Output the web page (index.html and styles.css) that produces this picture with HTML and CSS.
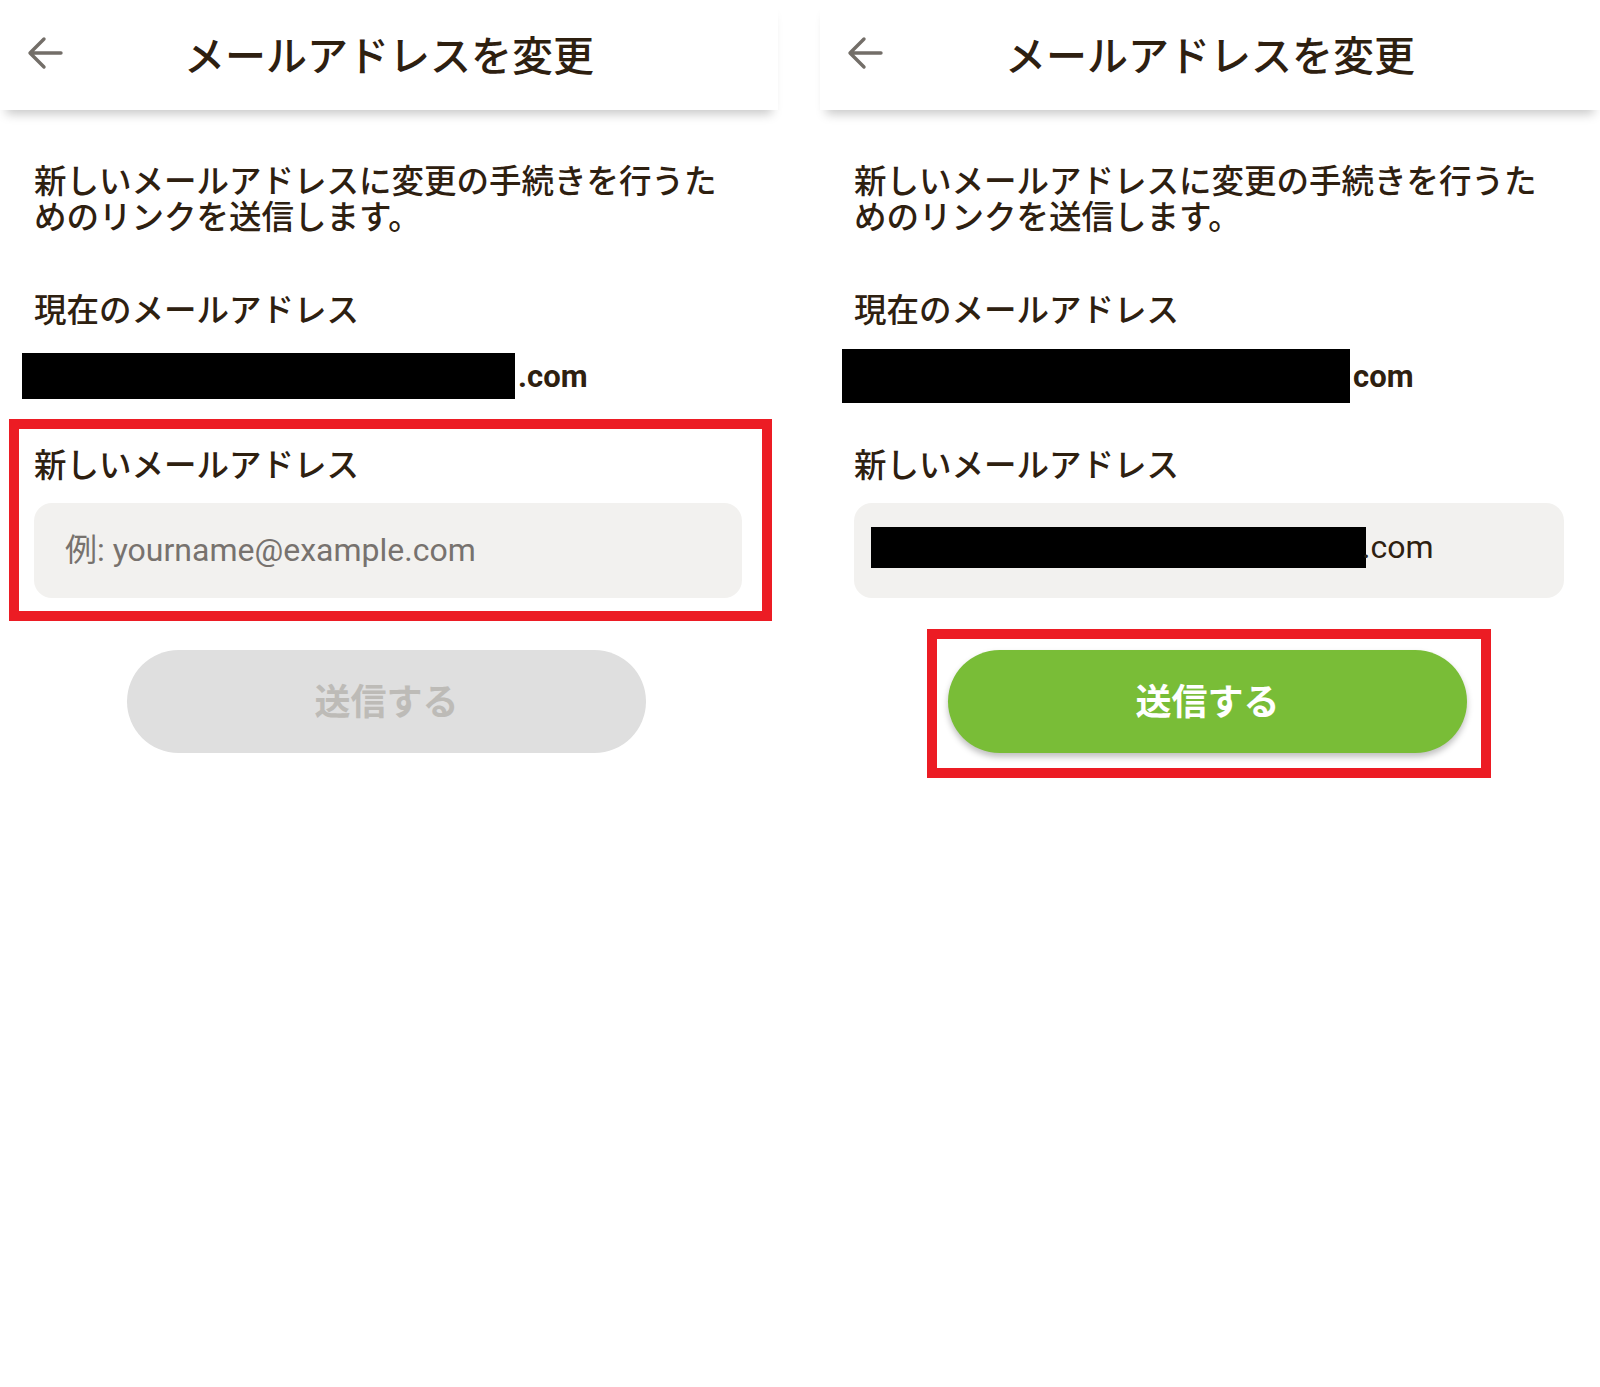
FILE: index.html
```html
<!DOCTYPE html>
<html lang="ja">

<head>
    <meta charset="UTF-8">
    <meta name="viewport" content="width=device-width, initial-scale=1.0">
    <title>メールアドレスを変更</title>
    <link rel="stylesheet" href="styles.css">
</head>

<body>
    <div class="screens">

        <!-- before: empty field -->
        <section class="screen screen-left">
            <header class="app-bar">
                <button class="back-btn" aria-label="戻る">
                    <svg width="36" height="34" viewBox="0 0 36 34">
                        <path d="M34 17 H4 M17 3 L3 17 L17 31" fill="none" stroke="#736e68" stroke-width="3.4"
                            stroke-linecap="round" stroke-linejoin="round" />
                    </svg>
                </button>
                <h1 class="app-title">メールアドレスを変更</h1>
                <span></span>
            </header>

            <div class="content">
                <p class="lead">新しいメールアドレスに変更の手続きを行うためのリンクを送信します。</p>

                <div class="label">現在のメールアドレス</div>
                <div class="current-mail">
                    <span class="redact redact-current"></span>
                    <span class="mail-tail">.com</span>
                </div>

                <div class="mark on field-mark">
                    <div class="label">新しいメールアドレス</div>
                    <div class="input">
                        <span class="placeholder">例: yourname@example.com</span>
                    </div>
                </div>

                <div class="mark button-mark">
                    <button class="submit" disabled>送信する</button>
                </div>
            </div>
        </section>

        <!-- after: filled field -->
        <section class="screen screen-right">
            <header class="app-bar">
                <button class="back-btn" aria-label="戻る">
                    <svg width="36" height="34" viewBox="0 0 36 34">
                        <path d="M34 17 H4 M17 3 L3 17 L17 31" fill="none" stroke="#736e68" stroke-width="3.4"
                            stroke-linecap="round" stroke-linejoin="round" />
                    </svg>
                </button>
                <h1 class="app-title">メールアドレスを変更</h1>
                <span></span>
            </header>

            <div class="content">
                <p class="lead">新しいメールアドレスに変更の手続きを行うためのリンクを送信します。</p>

                <div class="label">現在のメールアドレス</div>
                <div class="current-mail">
                    <span class="redact redact-current-wide"></span>
                    <span class="mail-tail">com</span>
                </div>

                <div class="mark field-mark">
                    <div class="label">新しいメールアドレス</div>
                    <div class="input">
                        <span class="redact redact-input"></span>
                        <span class="value">.com</span>
                    </div>
                </div>

                <div class="mark on button-mark">
                    <button class="submit active">送信する</button>
                </div>
            </div>
        </section>

    </div>
</body>

</html>
```

FILE: styles.css
```css
* {
    box-sizing: border-box;
}

body {
    margin: 0;
    background: #fff;
    color: #2e2010;
    font-family: "Noto Sans CJK JP", "Noto Sans", sans-serif;
}

.screens {
    display: flex;
    gap: 42px;
}

.screen-left {
    width: 778px;
}

.screen-right {
    width: 780px;
}

.app-bar {
    height: 110px;
    display: grid;
    grid-template-columns: 1fr auto 1fr;
    align-items: center;
    padding-bottom: 4px;
    background: #fff;
    box-shadow: 0 10px 10px -6px rgba(0, 0, 0, 0.22);
}

.back-btn {
    justify-self: start;
    margin-left: 27px;
    padding: 0;
    border: none;
    background: none;
    display: flex;
}

.app-title {
    margin: 0;
    font-size: 41px;
    font-weight: 500;
    line-height: 1;
}

.content {
    display: flex;
    flex-direction: column;
    padding: 0 36px 0 34px;
}

.lead {
    margin: 51px 0 0;
    max-width: 700px;
    font-size: 32.5px;
    font-weight: 500;
    line-height: 36px;
}

.label {
    font-size: 32.5px;
    font-weight: 500;
    line-height: 36px;
}

.content > .label {
    margin-top: 57px;
}

.current-mail {
    margin-top: 23px;
    height: 54px;
    display: flex;
    align-items: center;
}

.redact {
    display: block;
    background: #000;
    flex-shrink: 0;
}

.redact-current {
    width: 493px;
    height: 46px;
    margin-left: -12px;
}

.redact-current-wide {
    width: 508px;
    height: 54px;
    margin-left: -12px;
}

.mail-tail {
    font-family: Roboto, "Liberation Sans", sans-serif;
    font-weight: 700;
    font-size: 31px;
    margin-left: 3px;
    color: #2e2010;
}

.mark {
    border: 10px solid transparent;
}

.mark.on {
    border-color: #ec1c24;
}

.field-mark {
    margin: 16px -30px 0 -25px;
    padding: 16px 20px 13px 15px;
}

.input {
    margin-top: 22px;
    height: 95px;
    border-radius: 18px;
    background: #f2f1ef;
    display: flex;
    align-items: center;
    padding: 0 0 7px 31px;
    font-family: Roboto, "Noto Sans CJK JP", sans-serif;
    font-size: 32px;
}

.placeholder {
    color: #77726e;
}

.redact-input {
    width: 495px;
    height: 41px;
    margin-left: -14px;
}

.value {
    color: #2e2010;
    margin-left: -4px;
}

.button-mark {
    align-self: center;
    margin-top: 8px;
    padding: 11px 14px 15px 11px;
}

.submit {
    display: block;
    width: 519px;
    height: 103px;
    padding-bottom: 6px;
    border: none;
    border-radius: 52px;
    background: #dfdfdf;
    color: #bdbbb7;
    font-family: "Noto Sans CJK JP", sans-serif;
    font-size: 36px;
    font-weight: 700;
}

.submit.active {
    background: #79bd37;
    color: #fff;
    box-shadow: 0 4px 6px rgba(0, 0, 0, 0.25);
}
```
